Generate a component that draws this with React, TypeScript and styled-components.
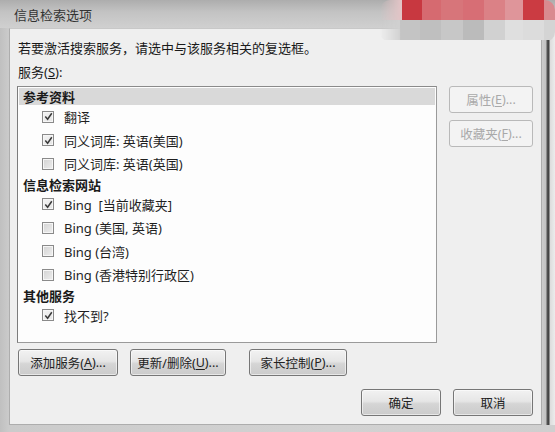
import React from "react";
import styled, { createGlobalStyle } from "styled-components";

const Global = createGlobalStyle`
  html, body { margin: 0; padding: 0; }
  body {
    width: 555px; height: 432px; overflow: hidden; background: #cfcfcf;
    font-family: "Noto Sans", "Noto Sans CJK SC", sans-serif;
  }
`;

const Window = styled.div`
  position: relative;
  width: 555px;
  height: 432px;
  display: flex;
  flex-direction: column;
  background: linear-gradient(90deg, #c0c0c0 0px, #cbcbcb 9px, #d2d2d2 60%, #cfcfcf 100%);
  overflow: hidden;
`;

const TitleBar = styled.div`
  height: 28px;
  display: flex;
  align-items: center;
  padding-left: 14px;
  font-size: 13px;
  color: #333;
  background: linear-gradient(180deg, #adadad 0px, #c3c3c3 12px, #d0d0d0 28px);
`;

const Main = styled.div`
  flex: 1;
  display: flex;
  padding: 0 0 7px 9px;
`;

const Client = styled.div`
  width: 533px;
  box-sizing: border-box;
  display: flex;
  flex-direction: column;
  padding: 9px 8px 0 7px;
  background: #efefef;
  border: 1px solid #adadad;
  border-top-color: #c8c8c8;
  color: #1a1a1a;
`;

const RightFrame = styled.div`
  width: 13px;
  background: linear-gradient(90deg, #cdcdcd 0px, #c2c2c2 4px, #575757 5px, #3f3f3f 7px, #dcdcdc 8px, #ececec 13px);
`;

const TextLine = styled.div<{ $gap?: number }>`
  height: 20px;
  line-height: 20px;
  font-size: 13px;
  margin-top: ${(p) => p.$gap ?? 0}px;
  padding-left: 1px;
  white-space: nowrap;
`;

const ListRow = styled.div`
  margin-top: 4px;
  display: flex;
  gap: 12px;
`;

const ListBox = styled.div`
  width: 421px;
  height: 257px;
  box-sizing: border-box;
  padding: 1px;
  background: #fdfdfd;
  border: 1px solid #9a9a9a;
  border-left-color: #7c7c7c;
  border-top-color: #8a8a8a;
  display: flex;
  flex-direction: column;
`;

const GroupHeader = styled.div<{ $active?: boolean }>`
  height: 17px;
  flex: none;
  display: flex;
  align-items: center;
  padding-left: 4px;
  font-size: 13px;
  font-weight: bold;
  color: #1a1a1a;
  background: ${(p) => (p.$active ? "#d9d9d9" : "transparent")};
`;

const Item = styled.div`
  height: 23.5px;
  flex: none;
  display: flex;
  align-items: center;
  padding-left: 23px;
  gap: 10px;
  font-size: 13px;
  color: #1f1f1f;
  white-space: pre;
`;

const Box = styled.span<{ $checked?: boolean }>`
  width: 12px;
  height: 12px;
  box-sizing: border-box;
  flex: none;
  border: 1px solid #8a8a8a;
  background: ${(p) =>
    p.$checked
      ? "linear-gradient(135deg, #f4f4f4, #e4e4e4)"
      : "linear-gradient(135deg, #d3d3d3, #eeeeee)"};
  box-shadow: inset 0 0 0 1px #f6f6f6;
  display: flex;
  align-items: center;
  justify-content: center;
`;

const SideCol = styled.div`
  width: 84px;
  display: flex;
  flex-direction: column;
  gap: 7px;
`;

const Button = styled.div<{ $w: number; $disabled?: boolean; $ml?: number }>`
  width: ${(p) => p.$w}px;
  height: 27px;
  box-sizing: border-box;
  margin-left: ${(p) => p.$ml ?? 0}px;
  display: flex;
  align-items: center;
  justify-content: center;
  border-radius: 3px;
  font-size: 12.5px;
  white-space: nowrap;
  ${(p) =>
    p.$disabled
      ? `
    border: 1px solid #b9b9b9;
    background: #f3f3f3;
    color: #a9a9a9;
  `
      : `
    border: 1px solid #767676;
    background: linear-gradient(180deg, #f2f2f2 0%, #e6e6e6 45%, #d5d5d5 55%, #cbcbcb 100%);
    box-shadow: inset 0 0 0 1px rgba(255,255,255,0.55);
    color: #222;
  `}
  u { text-decoration: underline; text-underline-offset: 2px; }
`;

const ButtonRow = styled.div`
  margin-top: 6px;
  padding-left: 1px;
  display: flex;
  gap: 12px;
`;

const ConfirmRow = styled.div`
  margin-top: 13px;
  display: flex;
  justify-content: flex-end;
  gap: 12px;
`;

const Mosaic = styled.svg`
  position: absolute;
  top: 0;
  right: 0;
`;

const Check = () => (
  <svg width="9" height="9" viewBox="0 0 9 9">
    <path d="M1.3 4.6 L3.6 7.2 L7.8 1.2" fill="none" stroke="#3a3a3a" strokeWidth="1.5" />
  </svg>
);

type Entry = { kind: "h"; text: string; active?: boolean } | { kind: "i"; text: string; checked: boolean };

const entries: Entry[] = [
  { kind: "h", text: "参考资料", active: true },
  { kind: "i", text: "翻译", checked: true },
  { kind: "i", text: "同义词库: 英语(美国)", checked: true },
  { kind: "i", text: "同义词库: 英语(英国)", checked: false },
  { kind: "h", text: "信息检索网站" },
  { kind: "i", text: "Bing  [当前收藏夹]", checked: true },
  { kind: "i", text: "Bing (美国, 英语)", checked: false },
  { kind: "i", text: "Bing (台湾)", checked: false },
  { kind: "i", text: "Bing (香港特别行政区)", checked: false },
  { kind: "h", text: "其他服务" },
  { kind: "i", text: "找不到?", checked: true },
];

const row1 = [
  [0, 22, "#e2c4c6"],
  [22, 20, "#c8393f"],
  [42, 19, "#d66b70"],
  [61, 22, "#d7757a"],
  [83, 21, "#d76e74"],
  [104, 21, "#db8186"],
  [125, 18, "#df959a"],
  [143, 21, "#cb3b42"],
  [164, 11, "#d98a8f"],
] as const;

const row2 = [
  [0, 20, "#d0d0d0"],
  [20, 20, "#c4c4c4"],
  [40, 21, "#bfbfbf"],
  [61, 22, "#c7c7c7"],
  [83, 21, "#bbbbbb"],
  [104, 21, "#d1d1d1"],
  [125, 18, "#dfdfdf"],
  [143, 21, "#dcdcdc"],
  [164, 11, "#d4d4d4"],
] as const;

export default function App() {
  return (
    <>
      <Global />
      <Window>
        <TitleBar>信息检索选项</TitleBar>
        <Main>
          <Client>
            <TextLine>若要激活搜索服务，请选中与该服务相关的复选框。</TextLine>
            <TextLine $gap={4}>
              服务(<u>S</u>):
            </TextLine>
            <ListRow>
              <ListBox>
                {entries.map((e, i) =>
                  e.kind === "h" ? (
                    <GroupHeader key={i} $active={e.active}>
                      {e.text}
                    </GroupHeader>
                  ) : (
                    <Item key={i}>
                      <Box $checked={e.checked}>{e.checked && <Check />}</Box>
                      {e.text}
                    </Item>
                  )
                )}
              </ListBox>
              <SideCol>
                <Button $w={84} $disabled>
                  属性(<u>E</u>)...
                </Button>
                <Button $w={84} $disabled>
                  收藏夹(<u>F</u>)...
                </Button>
              </SideCol>
            </ListRow>
            <ButtonRow>
              <Button $w={100}>
                添加服务(<u>A</u>)...
              </Button>
              <Button $w={96}>
                更新/删除(<u>U</u>)...
              </Button>
              <Button $w={98} $ml={11}>
                家长控制(<u>P</u>)...
              </Button>
            </ButtonRow>
            <ConfirmRow>
              <Button $w={80}>确定</Button>
              <Button $w={80}>取消</Button>
            </ConfirmRow>
          </Client>
          <RightFrame />
        </Main>
        <Mosaic width="175" height="42" viewBox="0 0 175 42">
          <defs>
            <filter id="soft" x="-5%" y="-5%" width="110%" height="110%">
              <feGaussianBlur stdDeviation="0.7" />
            </filter>
            <linearGradient id="fade" x1="0" x2="1" y1="0" y2="0">
              <stop offset="0" stopColor="#fff" stopOpacity="0" />
              <stop offset="0.12" stopColor="#fff" stopOpacity="1" />
              <stop offset="1" stopColor="#fff" stopOpacity="1" />
            </linearGradient>
            <mask id="m">
              <rect x="0" y="0" width="175" height="42" rx="10" fill="url(#fade)" />
            </mask>
          </defs>
          <g filter="url(#soft)" mask="url(#m)">
            {row1.map(([x, w, c], i) => (
              <rect key={"a" + i} x={x} y={0} width={w} height={20} fill={c} />
            ))}
            {row2.map(([x, w, c], i) => (
              <rect key={"b" + i} x={x} y={20} width={w} height={20} fill={c} />
            ))}
          </g>
        </Mosaic>
      </Window>
    </>
  );
}
